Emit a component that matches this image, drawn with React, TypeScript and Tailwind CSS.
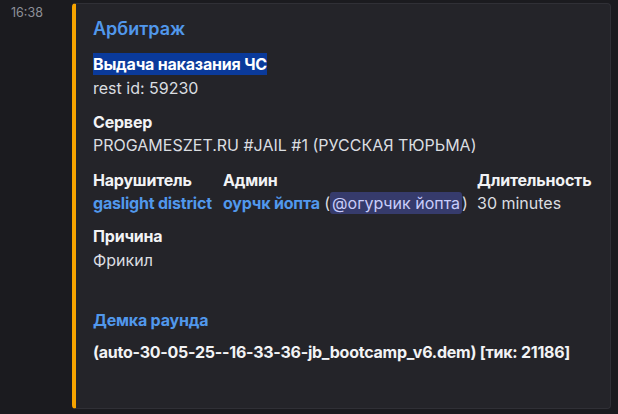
import React from "react";

const font = { fontFamily: 'Inter, "Noto Sans", sans-serif' };

export default function App() {
  return (
    <div className="w-[618px] h-[414px] bg-[#1b1b1f] flex overflow-hidden" style={font}>
      <div className="w-[72px] shrink-0 pl-[11px] pt-[5px] text-[12.5px] leading-[16px] text-[#8e9098]">
        16:38
      </div>
      <div className="mt-[3px] w-[539px] h-[406px] shrink-0 bg-[#242429] rounded-[4px] border border-[#303036] border-l-4 border-l-[#f5a300] pl-[17px] pt-[13px] text-[16px] text-[#dbdee1]">
        <div className="text-[18px] leading-[24px] font-semibold text-[#5198ec]">Арбитраж</div>
        <div className="mt-[11px] leading-[24px]">
          <div>
            <span className="bg-[#0a3a9b] font-bold tracking-[-0.2px] text-white py-[1px]">Выдача наказания ЧС</span>
          </div>
          <div>rest id: 59230</div>
        </div>
        <div className="mt-[11px] leading-[22px]">
          <div className="font-bold tracking-[-0.2px] text-[#f2f3f5]">Сервер</div>
          <div className="mt-[1px]">PROGAMESZET.RU #JAIL #1 (РУССКАЯ ТЮРЬМА)</div>
        </div>
        <div className="mt-[13px] flex leading-[22px]">
          <div className="w-[130px]">
            <div className="font-bold tracking-[-0.2px] text-[#f2f3f5]">Нарушитель</div>
            <div className="mt-[1px] font-bold tracking-[-0.2px] text-[#5198ec]">gaslight district</div>
          </div>
          <div className="w-[254px]">
            <div className="font-bold tracking-[-0.2px] text-[#f2f3f5]">Админ</div>
            <div className="mt-[1px] whitespace-nowrap">
              <span className="font-bold tracking-[-0.2px] text-[#5198ec]">оурчк йопта</span> (
              <span className="bg-[#363b6c] text-[#c9cdfb] rounded-[3px] px-[2px] py-[1px]">@огурчик йопта</span>)
            </div>
          </div>
          <div>
            <div className="font-bold tracking-[-0.2px] text-[#f2f3f5]">Длительность</div>
            <div className="mt-[1px]">30 minutes</div>
          </div>
        </div>
        <div className="mt-[11px] leading-[22px]">
          <div className="font-bold tracking-[-0.2px] text-[#f2f3f5]">Причина</div>
          <div className="mt-[2px]">Фрикил</div>
        </div>
        <div className="mt-[38px] leading-[22px] font-bold tracking-[-0.2px] text-[#5198ec]">Демка раунда</div>
        <div className="mt-[10px] leading-[22px] font-bold tracking-[-0.25px] text-[#f2f3f5] whitespace-nowrap">
          (auto-30-05-25--16-33-36-jb_bootcamp_v6.dem) [тик: 21186]
        </div>
      </div>
    </div>
  );
}
